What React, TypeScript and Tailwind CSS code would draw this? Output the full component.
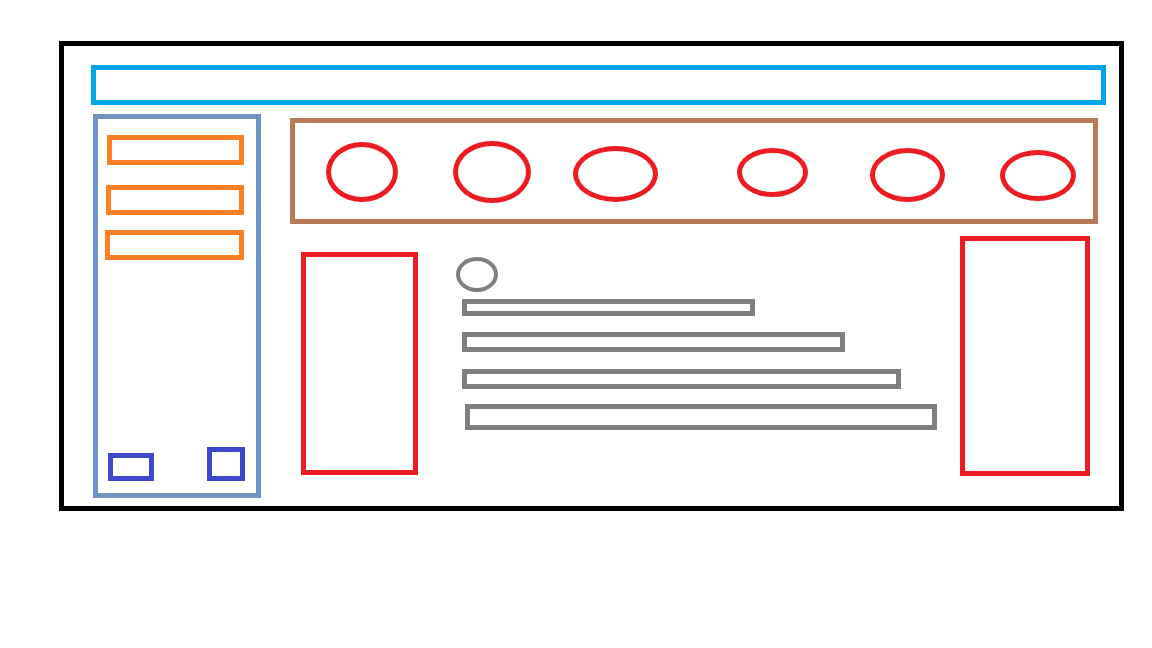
import React from "react";

// wireframe sketch: header bar, side menu, icon strip, content area
const circles = [
  { w: "w-[72px]", h: "h-[60px]", ml: "ml-[31px]", mt: "mt-[19px]" },
  { w: "w-[78px]", h: "h-[62px]", ml: "ml-[55px]", mt: "mt-[18px]" },
  { w: "w-[85px]", h: "h-[56px]", ml: "ml-[42px]", mt: "mt-[23px]" },
  { w: "w-[71px]", h: "h-[49px]", ml: "ml-[79px]", mt: "mt-[25px]" },
  { w: "w-[75px]", h: "h-[54px]", ml: "ml-[62px]", mt: "mt-[25px]" },
  { w: "w-[76px]", h: "h-[51px]", ml: "ml-[55px]", mt: "mt-[27px]" },
];

const Sidebar = () => {
  return (
    <div className="ml-[29px] w-[168px] h-[384px] box-border border-[5px] border-[#7092be] flex flex-col">
      <div className="ml-[9px] mt-[16px] w-[137px] h-[30px] box-border border-[5px] border-[#ff7f27]" />
      <div className="ml-[8px] mt-[20px] w-[138px] h-[30px] box-border border-[5px] border-[#ff7f27]" />
      <div className="ml-[7px] mt-[15px] w-[139px] h-[30px] box-border border-[5px] border-[#ff7f27]" />
      <div className="mt-auto flex items-end pl-[10px] pb-[12px]">
        <div className="w-[46px] h-[28px] box-border border-[5px] border-[#3f48cc]" />
        <div className="ml-[53px] w-[38px] h-[34px] box-border border-[5px] border-[#3f48cc]" />
      </div>
    </div>
  );
};

const Content = () => {
  return (
    <div className="flex items-start">
      <div className="ml-[11px] mt-[28px] w-[117px] h-[223px] box-border border-[5px] border-[#ed1c24]" />
      <div className="ml-[38px] mt-[33px] w-[481px] flex flex-col">
        <div className="w-[42px] h-[35px] box-border border-4 border-[#7f7f7f] rounded-[50%]" />
        <div className="ml-[6px] mt-[7px] w-[293px] h-[17px] box-border border-[5px] border-[#7f7f7f]" />
        <div className="ml-[6px] mt-[16px] w-[383px] h-[20px] box-border border-[5px] border-[#7f7f7f]" />
        <div className="ml-[6px] mt-[17px] w-[439px] h-[20px] box-border border-[5px] border-[#7f7f7f]" />
        <div className="ml-[9px] mt-[15px] w-[472px] h-[26px] box-border border-[5px] border-[#7f7f7f]" />
      </div>
      <div className="ml-[23px] mt-[12px] w-[130px] h-[240px] box-border border-[5px] border-[#ed1c24]" />
    </div>
  );
};

export default function App() {
  return (
    <div className="w-[1152px] h-[648px] bg-white overflow-hidden pt-[41px] pl-[59px]">
      <div className="w-[1065px] h-[470px] box-border border-[5px] border-black flex flex-col">
        <div className="ml-[27px] mt-[19px] w-[1015px] h-[40px] box-border border-[5px] border-[#00a2e8]" />
        <div className="flex items-start mt-[9px]">
          <Sidebar />
          <div className="ml-[29px] flex flex-col">
            <div className="mt-[4px] w-[808px] h-[106px] box-border border-[5px] border-[#b97a57] flex items-start">
              {circles.map((c, i) => (
                <div
                  key={i}
                  className={`${c.w} ${c.h} ${c.ml} ${c.mt} shrink-0 box-border border-[5px] border-[#ed1c24] rounded-[50%]`}
                />
              ))}
            </div>
            <Content />
          </div>
        </div>
      </div>
    </div>
  );
}
